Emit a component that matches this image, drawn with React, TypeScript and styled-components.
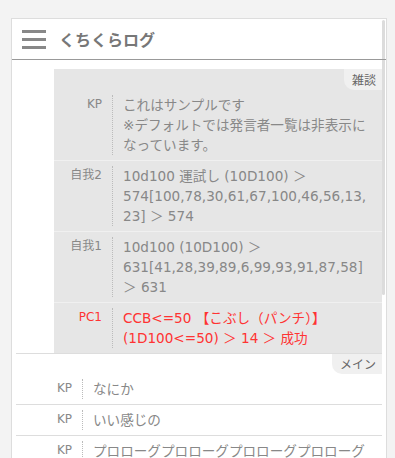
import React from "react";
import styled, { createGlobalStyle } from "styled-components";

const GlobalStyle = createGlobalStyle`
  html, body { margin: 0; padding: 0; background: #f3f3f3; overflow: hidden; }
  body { font-family: "DejaVu Sans", "Noto Sans CJK JP", sans-serif; }
  * { box-sizing: border-box; }
`;

const Page = styled.div`
  padding: 18px 8px 0 11px;
`;

const Panel = styled.div`
  position: relative;
  background: #fff;
  border: 1px solid #ddd;
  height: 460px;
  overflow: hidden;
`;

const Thumb = styled.div`
  position: absolute;
  top: 1px;
  right: 1px;
  width: 3px;
  height: 275px;
  background: #dcdcdc;
  border-radius: 2px;
`;

const Header = styled.header`
  position: relative;
  display: flex;
  align-items: center;
  gap: 13px;
  height: 41px;
  padding-left: 10px;
  border-bottom: 1px solid #999;
`;

const Burger = styled.div`
  display: flex;
  flex-direction: column;
  gap: 5px;
  span {
    display: block;
    width: 24px;
    height: 3px;
    background: #888;
  }
`;

const Title = styled.h1`
  margin: 0;
  font-family: "Noto Sans CJK JP", sans-serif;
  font-size: 16px;
  font-weight: 700;
  color: #777;
  line-height: 20px;
`;

const Content = styled.div`
  padding: 9px 4px 0 4px;
`;

const Section = styled.section<{ $side?: boolean }>`
  margin-left: ${(p) => (p.$side ? "38px" : "0")};
  background: ${(p) => (p.$side ? "#e6e6e6" : "#fff")};
  border-top: ${(p) => (p.$side ? "none" : "1px solid #ddd")};
`;

const TagBar = styled.div`
  display: flex;
  justify-content: flex-end;
`;

const Tag = styled.span<{ $side?: boolean }>`
  height: ${(p) => (p.$side ? "21px" : "20px")};
  padding: 0 6px 0 8px;
  background: #f0f0f0;
  border-bottom-left-radius: 10px;
  font-family: "Noto Sans CJK JP", sans-serif;
  font-size: 12px;
  line-height: ${(p) => (p.$side ? "21px" : "20px")};
  color: #666;
`;

const Row = styled.div<{ $side?: boolean }>`
  display: grid;
  grid-template-columns: ${(p) => (p.$side ? "58px" : "66px")} 1fr;
  padding: 5px 0;
  border-bottom: 1px solid ${(p) => (p.$side ? "#f0f0f0" : "#ddd")};
  &:last-child {
    border-bottom: ${(p) => (p.$side ? "none" : "1px solid #ddd")};
  }
`;

const Name = styled.div<{ $red?: boolean }>`
  text-align: right;
  padding-right: 10px;
  font-size: 12px;
  line-height: 18px;
  color: ${(p) => (p.$red ? "#ff3333" : "#888")};
`;

const Body = styled.div<{ $red?: boolean }>`
  border-left: 1px dotted #bbb;
  padding: 0 12px 0 10px;
  font-size: 13.6px;
  line-height: 20px;
  color: ${(p) => (p.$red ? "#ff3333" : "#888")};
  overflow-wrap: anywhere;
`;

type Msg = { name: string; text: React.ReactNode; red?: boolean };

const side: Msg[] = [
  {
    name: "KP",
    text: (
      <>
        これはサンプルです
        <br />
        ※デフォルトでは発言者一覧は非表示になっています。
      </>
    ),
  },
  {
    name: "自我2",
    text: "10d100 運試し (10D100) ＞ 574[100,78,30,61,67,100,46,56,13,23] ＞ 574",
  },
  {
    name: "自我1",
    text: "10d100 (10D100) ＞ 631[41,28,39,89,6,99,93,91,87,58] ＞ 631",
  },
  {
    name: "PC1",
    text: "CCB<=50 【こぶし（パンチ）】 (1D100<=50) ＞ 14 ＞ 成功",
    red: true,
  },
];

const main: Msg[] = [
  { name: "KP", text: "なにか" },
  { name: "KP", text: "いい感じの" },
  { name: "KP", text: "プロローグプロローグプロローグプロローグ" },
];

export default function App() {
  return (
    <>
      <GlobalStyle />
      <Page>
        <Panel>
          <Thumb />
          <Header>
            <Burger>
              <span />
              <span />
              <span />
            </Burger>
            <Title>くちくらログ</Title>
          </Header>
          <Content>
            <Section $side>
              <TagBar>
                <Tag $side>雑談</Tag>
              </TagBar>
              {side.map((m, i) => (
                <Row $side key={i}>
                  <Name $red={m.red}>{m.name}</Name>
                  <Body $red={m.red}>{m.text}</Body>
                </Row>
              ))}
            </Section>
            <Section>
              <TagBar>
                <Tag>メイン</Tag>
              </TagBar>
              {main.map((m, i) => (
                <Row key={i}>
                  <Name>{m.name}</Name>
                  <Body>{m.text}</Body>
                </Row>
              ))}
            </Section>
          </Content>
        </Panel>
      </Page>
    </>
  );
}
